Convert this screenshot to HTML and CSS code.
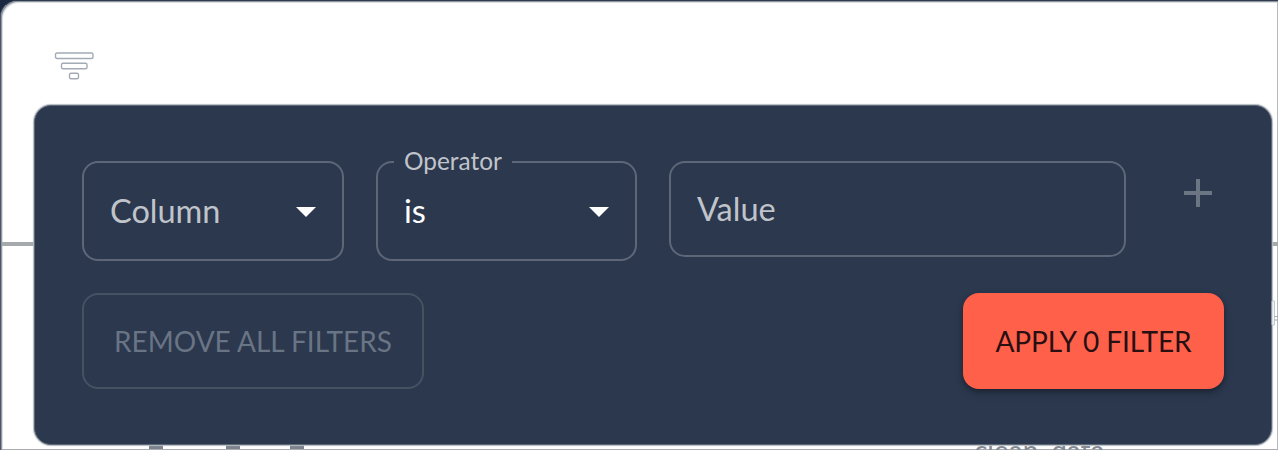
FILE: index.html
```
<!DOCTYPE html>
<html lang="en">
<head>
<meta charset="utf-8">
<title>Filters</title>
<link rel="stylesheet" href="styles.css">
</head>
<body>
<div class="page">
  <div class="backdrop">
    <span class="rule"></span>
    <span class="row-line"></span>
    <span class="tick tick-a"></span>
    <span class="tick tick-b"></span>
    <span class="tick tick-c"></span>
    <span class="cell-text">clean_data</span>
  </div>
  <svg class="filter-icon" width="40" height="28" viewBox="0 0 40 28" fill="none" stroke="#a3abb6" stroke-width="1.4">
    <rect x="1.5" y="1" width="37.5" height="5.5" rx="1.5"/>
    <rect x="7.5" y="11.2" width="25.5" height="5.5" rx="1.5"/>
    <rect x="15.5" y="21.2" width="9" height="5.5" rx="1.5"/>
  </svg>
  <main class="panel">
    <div class="fields">
      <div class="field select column">
        <span class="placeholder">Column</span>
        <svg class="caret" width="20" height="10" viewBox="0 0 20 10"><path d="M0 0h20L10 10z" fill="#fff"/></svg>
      </div>
      <div class="field select operator">
        <span class="label">Operator</span>
        <span class="value">is</span>
        <svg class="caret" width="20" height="10" viewBox="0 0 20 10"><path d="M0 0h20L10 10z" fill="#fff"/></svg>
      </div>
      <div class="field text"><span class="placeholder">Value</span></div>
      <svg class="plus" width="28" height="28" viewBox="0 0 28 28"><path d="M12 0h4v12h12v4H16v12h-4V16H0v-4h12z" fill="#6b7583"/></svg>
    </div>
    <div class="actions">
      <button class="btn remove">REMOVE ALL FILTERS</button>
      <button class="btn apply">APPLY 0 FILTER</button>
    </div>
  </main>
  <svg class="edge-mark" width="7" height="28" viewBox="0 0 7 28"><path d="M1 1h2.5v24H1z" fill="#f2f3f4" stroke="#c3c6ca"/><path d="M3.5 16.5H7M3.5 20H7" stroke="#a6aab1" stroke-width="1.2"/></svg>
</div>
</body>
</html>
```
FILE: styles.css
```
* { box-sizing: border-box; }
body {
  margin: 0;
  background: #1b2940;
  font-family: Lato, "Liberation Sans", sans-serif;
}
.page {
  position: relative;
  width: 1278px;
  height: 450px;
  overflow: hidden;
  border: solid;
  border-width: 1px 0 0 1px;
  border-color: #2f3c50 transparent transparent #4c586a;
  border-radius: 17px 0 0 0;
  background: #fff;
  box-shadow: inset 1px 1px 0 #8f96a1, inset -1px 0 0 #b4bac0, inset 2px 2px 0 #dcdfe2;
  padding: 51px 6px 0 33px;
}
.backdrop { position: absolute; inset: -1px 0 0 -1px; }
.backdrop > * { position: absolute; }
.rule { left: 2px; right: 0; top: 242px; height: 4px; background: #a6a9ab; }
.row-line { left: 2px; right: 0; top: 449px; height: 1px; background: #a8abb0; }
.tick { top: 445px; width: 14px; height: 4px; background: #7d838e; }
.tick-a { left: 149px; }
.tick-b { left: 226px; }
.tick-c { left: 290px; }
.cell-text {
  left: 974px;
  top: 434px;
  font-size: 28px;
  line-height: 32px;
  color: #848a92;
}
.edge-mark { position: absolute; left: 1270px; top: 299px; }
.filter-icon { display: block; margin-left: 20px; }
.panel {
  position: relative;
  height: 340px;
  margin-top: 25px;
  padding: 55px 47px 0 47px;
  border: 1px solid #5c6776;
  border-radius: 17px;
  background: #2b384e;
  box-shadow: 0 0 1px 1px #b4bbc0;
}
.fields { display: flex; align-items: flex-start; }
.field {
  position: relative;
  display: flex;
  align-items: center;
  height: 100px;
  padding: 0 26px;
  border: 2px solid #5d6777;
  border-radius: 16px;
  color: #c0c4ca;
  font-size: 32.5px;
  line-height: 46px;
}
.caret { margin-top: 2px; }
.select { justify-content: space-between; }
.column { width: 262px; margin-right: 32px; }
.operator { width: 261px; margin-right: 32px; }
.text { width: 457px; height: 96px; margin-right: 58px; }
.value { color: #fff; }
.label {
  position: absolute;
  left: 16px;
  top: -18px;
  width: 118px;
  padding-left: 10px;
  background: #2b384e;
  font-size: 24.4px;
  line-height: 32px;
}
.plus { margin-top: 18px; }
.actions { display: flex; justify-content: space-between; margin-top: 32px; }
.btn {
  height: 96px;
  padding: 0;
  border: 0;
  border-radius: 16px;
  font-family: inherit;
  font-size: 28px;
}
.remove { width: 342px; border: 2px solid #445262; background: transparent; color: #697484; }
.apply {
  width: 261px;
  background: #ff604a;
  color: #280f12;
  letter-spacing: -.05px;
  box-shadow: 0 4px 8px rgba(0, 0, 0, .24), 0 2px 4px rgba(0, 0, 0, .2);
}
```
